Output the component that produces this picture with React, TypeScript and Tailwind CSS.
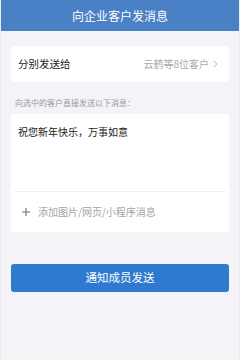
import React from "react";

export default function App() {
  return (
    <div
      className="w-[240px] h-[360px] bg-[#f4f3f7] flex flex-col overflow-hidden border-x border-[#ecebef]"
      style={{ fontFamily: '"Noto Sans CJK SC", "Noto Sans", sans-serif' }}
    >
      <div className="h-[31px] bg-[#4a80c6] flex items-center justify-center shrink-0">
        <span className="text-white text-[12px] leading-none">向企业客户发消息</span>
      </div>
      <div className="px-[10px] pt-[15px]">
        <div className="h-[36px] bg-white rounded-[3px] flex items-center justify-between pl-[7px] pr-[11px]">
          <span className="text-[10.5px] text-[#222] leading-none">分别发送给</span>
          <div className="flex items-center gap-[4px]">
            <span className="text-[10px] text-[#a8a8ad] leading-none">云鹤等8位客户</span>
            <svg width="5" height="8" viewBox="0 0 5 8" fill="none">
              <path d="M0.8 0.8l3 3.2-3 3.2" stroke="#b4b4b8" strokeWidth="1" />
            </svg>
          </div>
        </div>
      </div>
      <div className="px-[14px] pt-[17px] pb-[7px]">
        <span className="text-[8px] text-[#9a9a9f] leading-none block">向选中的客户直接发送以下消息：</span>
      </div>
      <div className="px-[10px]">
        <div className="bg-white rounded-[3px] flex flex-col">
          <div className="h-[77px] px-[7px] pt-[13px]">
            <span className="text-[10px] text-[#222] leading-none block">祝您新年快乐，万事如意</span>
          </div>
          <div className="h-px bg-[#efeff2] mx-[3px]" />
          <div className="h-[40px] flex items-center pl-[11px] gap-[8px]">
            <svg width="8" height="8" viewBox="0 0 8 8">
              <path d="M4 0v8M0 4h8" stroke="#707075" strokeWidth="1.1" />
            </svg>
            <span className="text-[10px] text-[#a3a3a8] leading-none">添加图片/网页/小程序消息</span>
          </div>
        </div>
      </div>
      <div className="px-[10px] pt-[32px]">
        <div className="h-[28px] bg-[#2e7ad0] rounded-[3px] flex items-center justify-center">
          <span className="text-white text-[11.5px] leading-none">通知成员发送</span>
        </div>
      </div>
    </div>
  );
}
